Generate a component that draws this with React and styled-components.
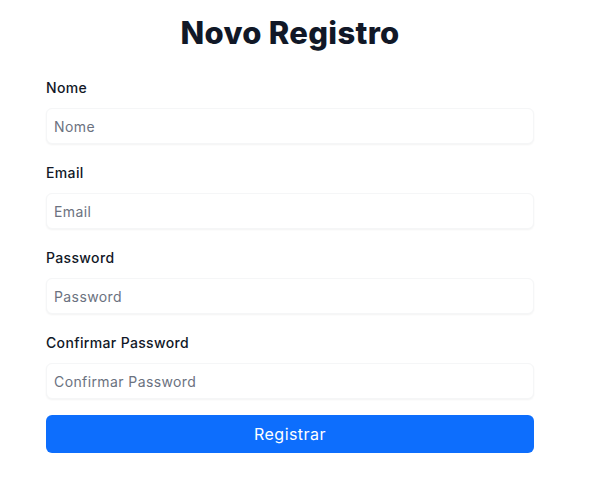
import React from "react";
import styled, { createGlobalStyle } from "styled-components";

const Global = createGlobalStyle`
  html, body { margin: 0; padding: 0; background: #ffffff; }
  body { font-family: "Inter", "Noto Sans", sans-serif; }
  * { box-sizing: border-box; }
`;

const Page = styled.div`
  padding: 15px 0 0 46px;
`;

const Form = styled.form`
  width: 488px;
  display: flex;
  flex-direction: column;
`;

const Title = styled.h1`
  margin: 0 0 26px;
  text-align: center;
  font-size: 31px;
  line-height: 36px;
  font-weight: 800;
  color: #111827;
  letter-spacing: 0.3px;
`;

const Field = styled.div`
  display: flex;
  flex-direction: column;
  margin-bottom: ${(p) => (p.$last ? "16px" : "18px")};
`;

const Label = styled.label`
  font-size: 14px;
  line-height: 21px;
  font-weight: 500;
  color: #111827;
  letter-spacing: 0.35px;
  margin-bottom: 10px;
`;

const Input = styled.input`
  height: 36px;
  width: 100%;
  border: 1px solid #f5f6f7;
  border-radius: 6px;
  padding: 0 7px;
  font-family: inherit;
  font-size: 14px;
  letter-spacing: 0.4px;
  color: #111827;
  background: #fff;
  box-shadow: 0 1px 2px rgba(0, 0, 0, 0.05);
  outline: none;
  &::placeholder { color: #6b7280; }
`;

const Button = styled.button`
  height: 38px;
  width: 100%;
  border: none;
  border-radius: 6px;
  background: #0d6efd;
  color: #fff;
  font-family: inherit;
  font-size: 16px;
  font-weight: 400;
  letter-spacing: 0.45px;
  cursor: pointer;
`;

const fields = ["Nome", "Email", "Password", "Confirmar Password"];

export default function App() {
  return (
    <Page>
      <Global />
      <Form onSubmit={(e) => e.preventDefault()}>
        <Title>Novo Registro</Title>
        {fields.map((f, i) => (
          <Field key={f} $last={i === fields.length - 1}>
            <Label>{f}</Label>
            <Input placeholder={f} type={f.includes("Password") ? "password" : "text"} />
          </Field>
        ))}
        <Button type="submit">Registrar</Button>
      </Form>
    </Page>
  );
}
